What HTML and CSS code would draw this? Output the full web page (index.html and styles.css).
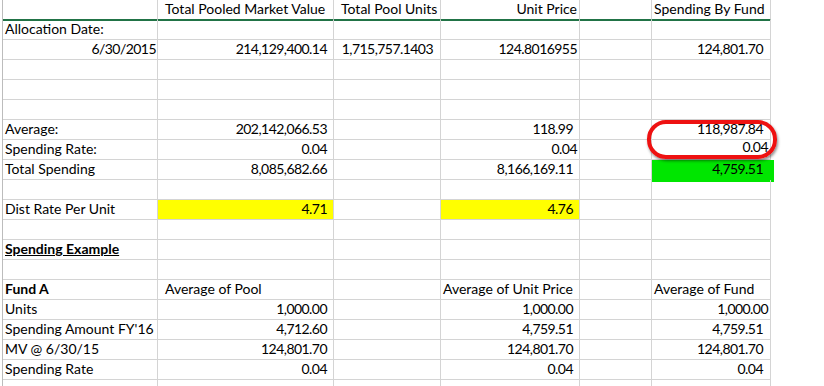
FILE: index.html
```html
<!DOCTYPE html>
<html>
<head>
<meta charset="utf-8">
<link rel="stylesheet" href="styles.css">
</head>
<body>
<div class="wrap">
  <div class="sheet">
    <div class="c hd"></div><div class="c hd pl7">Total Pooled Market Value</div><div class="c hd pl7">Total Pool Units</div><div class="c hd rh">Unit Price</div><div class="c hd"></div><div class="c hd pl2">Spending By Fund</div>

    <div class="c pl2">Allocation Date:</div><div class="c"></div><div class="c"></div><div class="c"></div><div class="c"></div><div class="c"></div>

    <div class="c r1">6/30/2015</div><div class="c ra">214,129,400.14</div><div class="c ra7">1,715,757.1403</div><div class="c rs">124.8016955</div><div class="c"></div><div class="c ra7">124,801.70</div>

    <div class="c"></div><div class="c"></div><div class="c"></div><div class="c"></div><div class="c"></div><div class="c"></div>
    <div class="c"></div><div class="c"></div><div class="c"></div><div class="c"></div><div class="c"></div><div class="c"></div>
    <div class="c"></div><div class="c"></div><div class="c"></div><div class="c"></div><div class="c"></div><div class="c"></div>

    <div class="c pl2">Average:</div><div class="c ra">202,142,066.53</div><div class="c"></div><div class="c ra">118.99</div><div class="c"></div><div class="c ra7">118,987.84</div>

    <div class="c pl2">Spending Rate:</div><div class="c ra">0.04</div><div class="c"></div><div class="c rs">0.04</div><div class="c"></div><div class="c rs up">0.04</div>

    <div class="c pl2">Total Spending</div><div class="c ra">8,085,682.66</div><div class="c"></div><div class="c ra">8,166,169.11</div><div class="c"></div><div class="c ra7 green">4,759.51</div>

    <div class="c"></div><div class="c"></div><div class="c"></div><div class="c"></div><div class="c"></div><div class="c"></div>

    <div class="c pl2">Dist Rate Per Unit</div><div class="c ra yellow">4.71</div><div class="c"></div><div class="c ra yellow">4.76</div><div class="c"></div><div class="c"></div>

    <div class="c"></div><div class="c"></div><div class="c"></div><div class="c"></div><div class="c"></div><div class="c"></div>

    <div class="c pl2 bu">Spending Example</div><div class="c"></div><div class="c"></div><div class="c"></div><div class="c"></div><div class="c"></div>

    <div class="c"></div><div class="c"></div><div class="c"></div><div class="c"></div><div class="c"></div><div class="c"></div>

    <div class="c pl2 b">Fund A</div><div class="c pl7">Average of Pool</div><div class="c"></div><div class="c pl2">Average of Unit Price</div><div class="c"></div><div class="c pl2">Average of Fund</div>

    <div class="c pl2">Units</div><div class="c ra">1,000.00</div><div class="c"></div><div class="c ra">1,000.00</div><div class="c"></div><div class="c rs">1,000.00</div>

    <div class="c pl2">Spending Amount FY'16</div><div class="c ra">4,712.60</div><div class="c"></div><div class="c ra">4,759.51</div><div class="c"></div><div class="c ra7">4,759.51</div>

    <div class="c pl2">MV @ 6/30/15</div><div class="c ra">124,801.70</div><div class="c"></div><div class="c ra">124,801.70</div><div class="c"></div><div class="c ra7">124,801.70</div>

    <div class="c pl2">Spending Rate</div><div class="c ra">0.04</div><div class="c"></div><div class="c ra">0.04</div><div class="c"></div><div class="c ra7">0.04</div>

    <div class="c"></div><div class="c"></div><div class="c"></div><div class="c"></div><div class="c"></div><div class="c"></div>
  </div>
  <div class="callout"></div>
</div>
</body>
</html>
```

FILE: styles.css
```css
html, body {
  margin: 0;
  padding: 0;
  background: #ffffff;
  overflow: hidden;
}

.wrap {
  position: relative;
  width: 824px;
  height: 386px;
  overflow: hidden;
}

.sheet {
  display: grid;
  grid-template-columns: 155px 176px 107px 139px 72px 119px;
  grid-auto-rows: 20px;
  margin-left: 2px;
  width: 768px;
  border-left: 1px solid #bcbcbc;
  font-family: Lato, "Open Sans", sans-serif;
  font-size: 14px;
  color: #000000;
}

.c {
  box-sizing: border-box;
  border-right: 1px solid #d4d4d4;
  border-bottom: 1px solid #d4d4d4;
  line-height: 18px;
  white-space: nowrap;
  overflow: visible;
}

.hd {
  height: 21px;
  line-height: 18px;
  border-bottom: 2px solid #217346;
}

.sheet > .hd {
  align-self: start;
}

.pl2 { padding-left: 2px; }
.pl7 { padding-left: 7px; }
.rh { text-align: right; padding-right: 2px; }
.r1 { text-align: right; padding-right: 1px; }
.rs { text-align: right; padding-right: 2px; }
.ra { text-align: right; padding-right: 6px; }
.ra7 { text-align: right; padding-right: 7px; }

.r1, .rs, .ra, .ra7 {
  letter-spacing: -0.55px;
}

.up { line-height: 14px; }

.b { font-weight: bold; }
.bu { font-weight: bold; text-decoration: underline; }

.yellow { background: #ffff00; }

.green {
  background: #00e600;
  border-right-color: #00e600;
  border-bottom-color: #00e600;
  box-shadow: 3px 2px 0 #00e600, 0 2px 0 #00e600, 3px 0 0 #00e600;
}

.callout {
  position: absolute;
  left: 647px;
  top: 120px;
  width: 130px;
  height: 39px;
  box-sizing: border-box;
  border: 4px solid #ee1111;
  border-radius: 19px;
  box-shadow: 1px 2px 3px rgba(0, 0, 0, 0.45);
}
```
